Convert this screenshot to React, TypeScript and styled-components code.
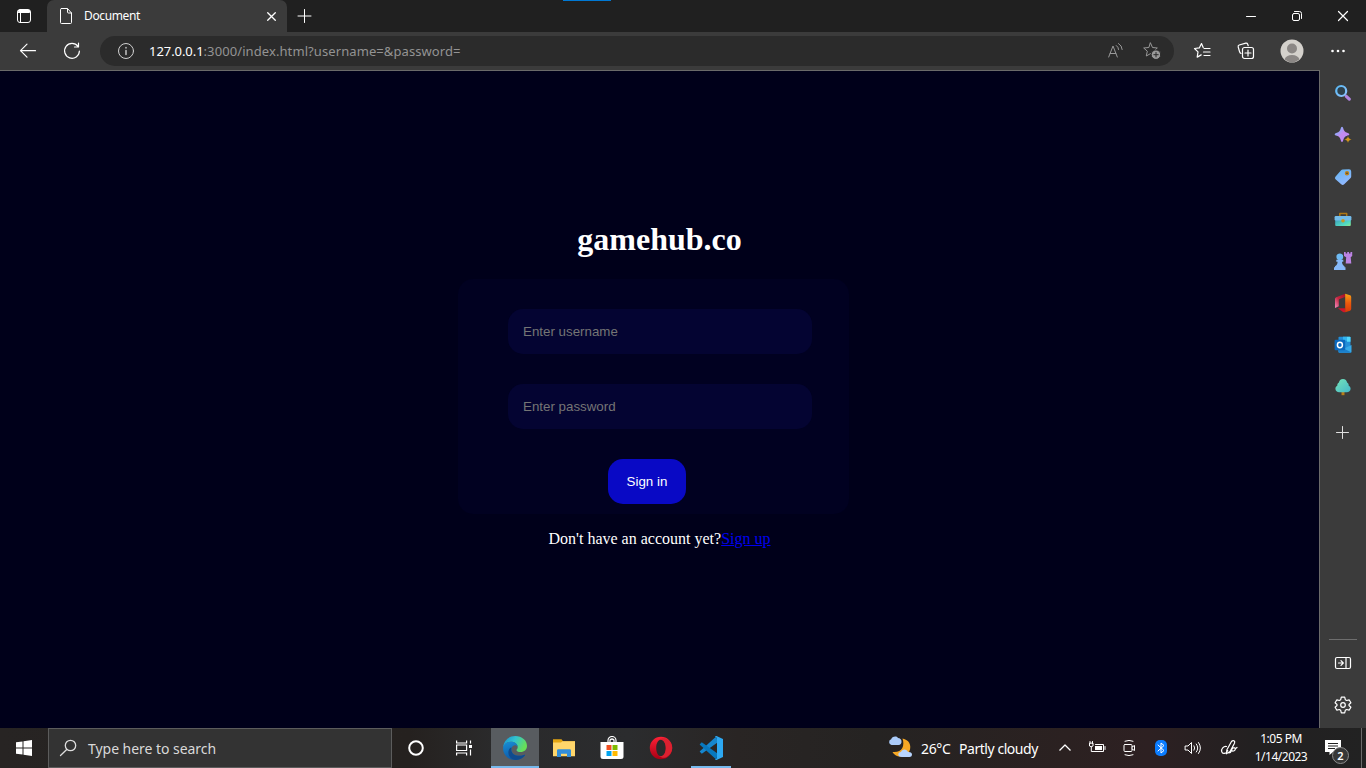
import React from "react";
import styled, { createGlobalStyle } from "styled-components";

const ui = `"Noto Sans", "Open Sans", sans-serif`;

const GlobalStyle = createGlobalStyle`
  * { box-sizing: border-box; }
  body { margin: 0; background: #00001a; overflow: hidden; }
`;

const Screen = styled.div`
  width: 1366px;
  height: 768px;
  display: flex;
  flex-direction: column;
  overflow: hidden;
  font-family: ${ui};
  color: #fff;
`;

const TabStrip = styled.header`
  position: relative;
  height: 32px;
  flex: none;
  display: flex;
  background: #202020;
`;

const AccentMark = styled.span`
  position: absolute;
  left: 563px;
  top: 0;
  width: 48px;
  height: 1px;
  background: #0078d4;
`;

const Slot = styled.span<{ $w: number }>`
  width: ${(p) => p.$w}px;
  flex: none;
  display: flex;
  align-items: center;
  justify-content: center;
`;

const Tab = styled.div`
  width: 240px;
  display: flex;
  align-items: center;
  padding: 0 8px 0 11px;
  background: #3b3b3b;
  border-radius: 7px 7px 0 0;
  font-size: 12px;
`;

const TabTitle = styled.span`
  flex: 1;
  margin-left: 10px;
  padding-bottom: 1px;
  letter-spacing: -0.38px;
`;

const WindowControls = styled.div`
  margin-left: auto;
  display: flex;
`;

const Toolbar = styled.div`
  height: 38px;
  flex: none;
  display: flex;
  align-items: center;
  padding-left: 6px;
  background: #3b3b3b;
`;

const AddressBar = styled.div`
  width: 1074px;
  height: 30px;
  margin: 0 6px;
  padding: 0 4px 0 8px;
  display: flex;
  align-items: center;
  border-radius: 15px;
  background: #2b2b2b;
`;

const Url = styled.span`
  flex: 1;
  margin-left: 5px;
  font-size: 13px;
  letter-spacing: 0.09px;
  color: #939393;

  b {
    font-weight: 400;
    letter-spacing: -0.06px;
    color: #fff;
  }
`;

const Body = styled.div`
  height: 658px;
  flex: none;
  display: flex;
  background: #3b3b3b;
`;

const Page = styled.main`
  width: 1320px;
  border-top: 1px solid #6a6a6a;
  border-right: 1px solid #6a6a6a;
  background: #00001a;
  display: flex;
  flex-direction: column;
  align-items: center;
  font-family: "Liberation Serif", serif;
`;

const Brand = styled.h1`
  margin: 150px 0 0;
  font-size: 32px;
  line-height: 36px;
`;

const LoginCard = styled.form`
  width: 391px;
  height: 235px;
  margin: 22px 12px 0 0;
  padding: 30px 37px 0 50px;
  display: flex;
  flex-direction: column;
  gap: 30px;
  border-radius: 15px;
  background: #010121;
`;

const Field = styled.input`
  width: 304px;
  height: 45px;
  flex: none;
  padding: 0 15px;
  border: 0;
  border-radius: 15px;
  background: #040432;
  color: #fff;
  font: 13.333px "Liberation Sans", sans-serif;

  &::placeholder {
    color: #757575;
  }
`;

const SubmitButton = styled.button`
  width: 78px;
  height: 45px;
  flex: none;
  margin-left: 100px;
  padding: 0;
  border: 0;
  border-radius: 15px;
  background: #0909c5;
  color: #fff;
  font: 13.333px "Liberation Sans", sans-serif;
`;

const SignUpLine = styled.p`
  margin: 16px 0 0;
  font-size: 16px;
  line-height: 18px;

  a {
    color: #0000ee;
    text-decoration: underline;
  }
`;

const Sidebar = styled.aside`
  width: 46px;
  display: flex;
  flex-direction: column;
  align-items: center;
  padding: 2px 0;
`;

const SideItem = styled.span<{ $before?: number }>`
  height: 42px;
  flex: none;
  margin-top: ${(p) => p.$before ?? 0}px;
  display: flex;
  align-items: center;
`;

const SideDivider = styled.hr`
  width: 28px;
  height: 1px;
  margin: auto 0 2px;
  border: 0;
  background: #6e6e6e;
`;

const Taskbar = styled.footer`
  height: 40px;
  flex: none;
  display: flex;
  background: linear-gradient(90deg, #272423 0, #25211f 30%, #2a2a2b 36%, #2b2c2e 46%, #292524 54%, #252322 64%, #2b2121 78%, #2d2022 84%, #222021 92%, #222 100%);
`;

const SearchBox = styled.div`
  width: 344px;
  display: flex;
  align-items: center;
  padding-left: 10px;
  border: 1px solid #5c5c5c;
  background: #333;
  color: #d9d9d9;
  font-size: 14px;
  letter-spacing: -0.04px;

  span {
    margin-left: 11px;
  }
`;

const AppButton = styled.span<{ $w: number; $active?: boolean; $line?: boolean }>`
  width: ${(p) => p.$w}px;
  display: flex;
  align-items: center;
  justify-content: center;
  background: ${(p) => (p.$active ? "#585c60" : "transparent")};
  box-shadow: ${(p) => (p.$line ? "inset 0 -2px #76b9ed" : "none")};
`;

const Tray = styled.div`
  margin-left: auto;
  width: 478px;
  display: flex;
  align-items: center;
`;

const Weather = styled.span`
  width: 161px;
  display: flex;
  align-items: center;
  font-size: 14px;
  white-space: nowrap;
`;

const Temperature = styled.span`
  width: 38px;
  margin-left: 7px;
  letter-spacing: -0.35px;
`;

const Condition = styled.span`
  letter-spacing: -0.45px;
`;

const Clock = styled.span`
  width: 66px;
  margin-right: 2px;
  display: flex;
  flex-direction: column;
  align-items: center;
  font-size: 12px;
  line-height: 18px;
  letter-spacing: -0.5px;
  white-space: nowrap;
`;

const Notifications = styled.span`
  width: 46px;
  height: 40px;
  display: flex;
  align-items: center;
  padding-left: 8px;
  border-right: 1px solid #6b6b6b;
  position: relative;
`;

const Count = styled.b`
  position: absolute;
  left: 16px;
  top: 19px;
  width: 17px;
  height: 17px;
  display: flex;
  align-items: center;
  justify-content: center;
  border: 1px solid #8c8c8c;
  border-radius: 50%;
  background: #373737;
  font-size: 11px;
  font-weight: 600;
  line-height: 14px;
`;

const Svg = styled.svg`
  display: block;
  flex: none;
`;

type IconProps = { w?: number; h?: number; color?: string; sw?: number; children: React.ReactNode };

const Icon = ({ w = 16, h = w, color = "#fff", sw = 1, children }: IconProps) => (
  <Svg width={w} height={h} viewBox={`0 0 ${w} ${h}`} fill="none" stroke={color} strokeWidth={sw} strokeLinecap="round" strokeLinejoin="round">
    {children}
  </Svg>
);

const starPath = "M7.500 1l2 4.500 4.800.5-3.600 3.200 1 4.800-4.200-2.400-4.200 2.400 1-4.800L.7 6l4.800-.5z";

const SearchLens = () => (
  <Icon w={18}>
    <defs>
      <linearGradient id="lens" x1="0" y1="0" x2="1" y2="1">
        <stop offset="0" stopColor="#58b7f3" />
        <stop offset="1" stopColor="#8fc3ff" />
      </linearGradient>
    </defs>
    <path d="M12.300 12.300l3 2.800" stroke="#b184e0" strokeWidth="3.2" />
    <circle cx="7.200" cy="7" r="5" fill="#2e414c" stroke="url(#lens)" strokeWidth="2.200" />
  </Icon>
);

const Sparkle = () => (
  <Icon w={18}>
    <defs>
      <linearGradient id="spark" x1="0" y1="0" x2="1" y2="1">
        <stop offset="0.1" stopColor="#72b9ff" />
        <stop offset="0.5" stopColor="#c58aef" />
        <stop offset="1" stopColor="#b18cff" />
      </linearGradient>
    </defs>
    <path d="M8 .8Q9 .8 9.300 2.500q.7 3.400 3.900 4.300 2.200.5 2.200 1.500t-2.200 1.500q-3.200.9-3.900 4.300Q9 16 8 16t-1.300-1.900Q6 10.700 2.800 9.800.6 9.300.6 8.300t2.200-1.500Q6 5.900 6.700 2.500 7 .8 8 .8z" fill="url(#spark)" stroke="none" />
    <path d="M14 9.700q.6 3.200 3.800 3.800-3.200.6-3.800 3.800-.6-3.200-3.800-3.800 3.200-.6 3.800-3.800z" fill="#d1961c" stroke="#3b3b3b" strokeWidth=".4" />
  </Icon>
);

const PriceTag = () => (
  <Icon w={18}>
    <defs>
      <linearGradient id="tag" x1="0" y1="0" x2="0.5" y2="1">
        <stop offset="0" stopColor="#62b5ef" />
        <stop offset="1" stopColor="#91b8ff" />
      </linearGradient>
    </defs>
    <path d="M8.700 1.400l6.300-.1q2.200 0 2.200 2.200V8.600q0 .8-.6 1.500l-6.400 6.200q-1.500 1.400-3 0L1.500 11.300q-1.300-1.400.1-2.800l5.500-6.300q.6-.8 1.600-.8z" fill="url(#tag)" stroke="none" />
    <circle cx="13" cy="5.300" r="1.500" fill="#273142" stroke="#bd831d" strokeWidth="1.500" />
  </Icon>
);

const Toolbox = () => (
  <Icon w={18}>
    <defs>
      <linearGradient id="box" x1="0" y1="0" x2="1" y2="1">
        <stop offset="0" stopColor="#3b95bc" />
        <stop offset="0.700" stopColor="#51dcc2" />
        <stop offset="1" stopColor="#91e58b" />
      </linearGradient>
    </defs>
    <path d="M5.800 6V3.500h6.900V6" stroke="#af7713" strokeWidth="1.500" />
    <rect x="1.200" y="8" width="15.600" height="8" rx="1" fill="url(#box)" stroke="none" />
    <rect x=".6" y="6" width="16.800" height="4.400" rx="1.200" fill="#74bcea" stroke="none" />
    <circle cx="9" cy="10.700" r="1.800" fill="#c59a25" stroke="none" />
  </Icon>
);

const ChessPieces = () => (
  <Icon w={20}>
    <g stroke="none">
      <path d="M11 1h1.700v1.500h1.500V1H16v1.500h1.500V1h1.700v4l-1.500 1.200.6 6.300h-5.600l.5-6.300L11 5z" fill="#bc83e3" />
      <circle cx="6.800" cy="5.800" r="3.400" fill="#6ebbf4" />
      <path d="M3.300 8.800h7v1.900H9c0 2.100 1 3.500 2.500 4.500v1h1v2.800H1v-2.800h1v-1c1.600-1 2.600-2.400 2.600-4.500H3.300z" fill="#87b9f8" />
    </g>
  </Icon>
);

const OfficeLogo = () => (
  <Icon w={18} h={20}>
    <defs>
      <linearGradient id="officeRight" x1="0" y1="0" x2="0" y2="1">
        <stop offset="0" stopColor="#f7a316" />
        <stop offset="0.500" stopColor="#ec5a0c" />
        <stop offset="1" stopColor="#d83a08" />
      </linearGradient>
      <linearGradient id="officeLeft" x1="1" y1="0" x2="0" y2="1">
        <stop offset="0" stopColor="#a90f22" />
        <stop offset="0.500" stopColor="#c4263f" />
        <stop offset="1" stopColor="#f48bc0" />
      </linearGradient>
    </defs>
    <g stroke="none">
      <path d="M11.200.8L2.200 4.300Q1 4.800 1 6v9l3.800-1.800V7q0-.8.8-1.100l5.600-1.800z" fill="url(#officeLeft)" />
      <path d="M3.800 15.300h7.400v3.900l-1 .1q-.6 0-1.100-.3z" fill="#d0162a" />
      <path d="M11.200.8l4.800 1.500q1.200.4 1.200 1.600v12.200q0 1.200-1.200 1.600l-4.800 1.500z" fill="url(#officeRight)" />
    </g>
  </Icon>
);

const OutlookLogo = () => (
  <Icon w={18}>
    <g stroke="none">
      <path d="M4.500 1.500q0-.8.800-.8h10.400q.8 0 .8.800V12h-12z" fill="#238ed8" />
      <path d="M9 .7h4v4H9z" fill="#32b4ef" />
      <path d="M13 .7h2.700q.8 0 .8.800v4.200H13z" fill="#50d7fc" />
      <path d="M4.500 9l6.500 3 6.500-3v6.700q0 1-1 1h-11q-1 0-1-1z" fill="#35a9e8" />
      <path d="M4.500 10l12.700 6.300q-.3.400-.7.400h-11q-1 0-1-1z" fill="#1b80cd" />
      <rect x=".6" y="3.700" width="10.600" height="10.600" rx="1" fill="#0b68bd" />
    </g>
    <ellipse cx="5.900" cy="9" rx="2.500" ry="2.700" strokeWidth="1.500" />
  </Icon>
);

const Tree = () => (
  <Icon w={18}>
    <defs>
      <linearGradient id="tree" x1="0" y1="0" x2="1" y2="1">
        <stop offset="0" stopColor="#75e4b7" />
        <stop offset="1" stopColor="#45b8ca" />
      </linearGradient>
    </defs>
    <path d="M9 12.500v4.700" stroke="#b77d18" strokeWidth="3" strokeLinecap="butt" />
    <path d="M9 .9c2.400 0 3.800 1.600 4.100 3.700 1.500.8 1.700 2 1.500 3 1.400.8 2 1.900 2 3.200 0 2.300-1.800 3.500-3.800 3.500H5.200c-2 0-3.800-1.200-3.800-3.500 0-1.300.6-2.400 2-3.200-.2-1 0-2.200 1.500-3C5.200 2.500 6.600.9 9 .9z" fill="url(#tree)" stroke="none" />
  </Icon>
);

const Plus = ({ size }: { size: number }) => (
  <Icon w={size}>
    <path d={`M${size / 2} 1v${size - 2}M1 ${size / 2}h${size - 2}`} />
  </Icon>
);

const SidebarPlus = () => (
  <Icon w={14} color="#e0e0e0">
    <path d="M6.500 .5v12M.5 6.500h12" />
  </Icon>
);

const Gear = () => (
  <Icon w={18} sw={1.2}>
    <path d="M7.300 1.200h3.400l.6 2.500 1.400.8 2.400-.7 1.800 3L15 8.500v1l1.900 1.700-1.800 3-2.400-.7-1.400.8-.6 2.500H7.300l-.6-2.500-1.400-.8-2.400.7-1.800-3L3 9.500v-1L1.100 6.800l1.800-3 2.400.7 1.400-.8z" />
    <circle cx="9" cy="9" r="2.300" />
  </Icon>
);

const EdgeLogo = () => (
  <Icon w={24}>
    <defs>
      <linearGradient id="edgeTop" x1="0" y1="0" x2="1" y2="0.400">
        <stop offset="0" stopColor="#168ccf" />
        <stop offset="0.500" stopColor="#32c3cf" />
        <stop offset="1" stopColor="#67df58" />
      </linearGradient>
      <linearGradient id="edgeLow" x1="0" y1="0" x2="0.300" y2="1">
        <stop offset="0" stopColor="#188ed5" />
        <stop offset="1" stopColor="#0c59a8" />
      </linearGradient>
    </defs>
    <g stroke="none">
      <path d="M.3 11C.7 4.600 5.800.1 12.200.1 19 .1 24 4.500 24 10c0 3.800-3 6-6.300 6-2.700 0-4.200-1-4.200-1.800 0-.7 1.200-1.300 1.200-3.100C14.700 8 11.500 5.800 8 5.800 4.500 5.800 2 7.700.3 11z" fill="url(#edgeTop)" />
      <path d="M.1 12.200C.1 8.600 3.500 5.800 7.800 5.800c3.600 0 6.600 2 6.900 4.900-.8-1.200-2-1.700-3-1.500-2.400.3-3.800 2.700-3.200 5.600.8 4.300 6.800 6.200 12.400 4.100.9-.3 1.300.1.8.8C19.300 22.500 15.800 24 12.100 24 5.300 24 .1 18.700.1 12.200z" fill="url(#edgeLow)" />
      <path d="M8.400 12.700c-.9 5.400 5.600 9 12.500 6.200 1-.4 1.300.2.700.9-2 2.500-5.200 4-8.500 4.200-4.700-.2-8-4-7.700-8 .1-2.100 1.300-4 3-4.700z" fill="#114b8d" />
    </g>
  </Icon>
);

const FolderLogo = () => (
  <Icon w={22} h={20}>
    <g stroke="none">
      <path d="M0 1.200h8.500l1.500 2h12v5H0z" fill="#e3a512" />
      <path d="M0 4.500h8l1.500-1.300H22v15H0z" fill="#ffd66b" />
      <path d="M4 19v-6.500q0-1.200 1.200-1.200h11.600q1.200 0 1.200 1.200V19h-4v-3.300H8V19z" fill="#328ed9" />
    </g>
  </Icon>
);

const StoreLogo = () => (
  <Icon w={24}>
    <path d="M8 6V4.500a4 4 0 018 0V6M10 6V4q2-2 4 0v2" strokeWidth="1.200" />
    <g stroke="none">
      <path d="M.5 6h23v14.500q0 2.500-2.500 2.500H3Q.5 23 .5 20.500z" fill="#fff" />
      <path d="M6.500 9h5v5h-5z" fill="#f25022" />
      <path d="M12.500 9h5v5h-5z" fill="#7fba00" />
      <path d="M6.500 15h5v5h-5z" fill="#00a4ef" />
      <path d="M12.500 15h5v5h-5z" fill="#ffb900" />
    </g>
  </Icon>
);

const OperaLogo = () => (
  <Icon w={24}>
    <defs>
      <linearGradient id="opera" x1="0" y1="0" x2="0" y2="1">
        <stop offset="0" stopColor="#ff2136" />
        <stop offset="1" stopColor="#a70014" />
      </linearGradient>
    </defs>
    <path fillRule="evenodd" stroke="none" fill="url(#opera)" d="M12 .8a11.200 11.200 0 100 22.400A11.200 11.200 0 1012 .8zm0 2.800c2.700 0 4.800 3.700 4.800 8.400s-2.100 8.400-4.800 8.400-4.800-3.700-4.800-8.400S9.300 3.600 12 3.600z" />
    <path d="M10 4.200C13 .9 17 2.500 17.700 3 21 5 23.200 8 23.200 12S21 19 17.700 21c-.8.500-4.600 2-7.700-1.200 4 1.700 6.800-2.800 6.800-7.800S14 2.500 10 4.200z" fill="#dc2130" stroke="none" />
  </Icon>
);

const CodeLogo = () => (
  <Icon w={24}>
    <g stroke="none">
      <path d="M17.500.2L.6 15.400l2.200 2.400 15.700-11.300z" fill="#1686ce" />
      <path d="M17.500 23.800L.6 8.600l2.200-2.400 15.700 11.300z" fill="#0878be" />
      <path d="M17.500 0L24 3v18l-6.500 3q-1 .2-1.500-.8 2 .2 2-1.700V2.500Q18 .8 16 .8q.5-1 1.500-.8z" fill="#2da8f2" />
    </g>
  </Icon>
);

const WeatherIcon = () => (
  <Icon w={26}>
    <g stroke="none">
      <path d="M14.500 3.500c6.700 1.300 8.700 6.500 7.500 11-1.400 5.600-8 8.500-13 6.500-2-.8-3.600-2.300-4.500-4C14 18 17 11 14.500 3.500z" fill="#f6a824" />
      <path d="M3.500 10a3 3 0 01-.3-5.800C3.500 2 8.200 0 10 3c2 0 3.500 1.300 3.500 3.200A3.500 3.500 0 0110.500 10z" fill="#aacbfa" />
      <path d="M14 22c-5 0-4.500-5-1-5 .8-3.400 6-3.400 7 0 2.500-.3 4 1 4 2.500 0 1.700-1.200 2.500-2.500 2.500z" fill="#b8d5ff" />
    </g>
  </Icon>
);

const tools = [SearchLens, Sparkle, PriceTag, Toolbox, ChessPieces, OfficeLogo, OutlookLogo, Tree];

export default function App() {
  return (
    <Screen>
      <GlobalStyle />
      <TabStrip>
        <AccentMark />
        <Slot $w={47}>
          <Icon>
            <rect x="1.500" y="1.500" width="13" height="13" rx="2.500" />
            <path d="M2.500 2.500h11v2h-11z" fill="#fff" />
            <path d="M4.500 5v9" />
          </Icon>
        </Slot>
        <Tab>
          <Icon>
            <path d="M3.500.500h6l4 4.500v9.500q0 1-1 1h-9q-1 0-1-1v-13q0-1 1-1zM9.500 1v3q0 1 1 1h3" />
          </Icon>
          <TabTitle>Document</TabTitle>
          <Icon sw={1.3}>
            <path d="M4.700 4.700l7.600 7.600M12.300 4.700l-7.600 7.600" />
          </Icon>
        </Tab>
        <Slot $w={35}>
          <Icon w={15}><path d="M7.500 .5v13M1 7h13" /></Icon>
        </Slot>
        <WindowControls>
          <Slot $w={46}><Icon><path d="M3.500 8.500h9" /></Icon></Slot>
          <Slot $w={46}>
            <Icon>
              <rect x="3.500" y="5.500" width="7" height="7" rx="1.500" />
              <path d="M5.500 3.500h5q2 0 2 2v5" />
            </Icon>
          </Slot>
          <Slot $w={46}><Icon sw={1.200}><path d="M3.500 3.500l9 9M12.500 3.500l-9 9" /></Icon></Slot>
        </WindowControls>
      </TabStrip>

      <Toolbar>
        <Slot $w={44}><Icon w={18}><path d="M16.500 8.700H1.500M8 2.200L1.500 8.700 8 15.200" strokeWidth="1.200" /></Icon></Slot>
        <Slot $w={44}><Icon w={18} sw={1.200}><path d="M15 4.500A7.400 7.400 0 1016.400 9M15.500 1v4h-4" /></Icon></Slot>
        <AddressBar>
          <Slot $w={36}>
            <Icon w={18} color="#d0d0d0">
              <circle cx="9" cy="9" r="7.500" />
              <path d="M9 8.500v4M9 5.500v.5" strokeWidth="1.400" />
            </Icon>
          </Slot>
          <Url><b>127.0.0.1</b>:3000/index.html?username=&amp;password=</Url>
          <Slot $w={36}>
            <Icon w={18} color="#999">
              <path d="M2.700 15L7 4l4.300 11M4.200 11.500h5.600M10.300 3.500q2.200 1.500 2.300 4M12.500 1.500q3.500 2 3.700 6" />
            </Icon>
          </Slot>
          <Slot $w={37}>
            <Icon w={18} color="#999">
              <path d={starPath} />
              <circle cx="13" cy="12.700" r="4.800" fill="#999" stroke="#2b2b2b" />
              <path d="M13 10.500v4.400M10.800 12.700h4.400" stroke="#2b2b2b" />
            </Icon>
          </Slot>
        </AddressBar>
        <Slot $w={44}>
          <Icon w={18} sw={1.2}>
            <path d="M10.200 5.500l-1.700-4-2.200 4.400L1.500 6.500 5 9.900l-.8 5.200 4-2.200M11 6.500h6M10.500 10H17M11 13.500h6" />
          </Icon>
        </Slot>
        <Slot $w={44}>
          <Icon w={18} sw={1.2}>
            <path d="M4 11.500Q2.900 11 2.500 9.500L1.200 5Q.8 3.500 2.200 3l6.600-1.800q1.400-.3 1.900 1l.5 1.500" />
            <rect x="5.500" y="5.500" width="11" height="11" rx="2" />
            <path d="M11 8v6M8 11h6" />
          </Icon>
        </Slot>
        <Slot $w={47}>
          <Icon w={24}>
            <g stroke="none">
              <circle cx="12" cy="12" r="11.500" fill="#d4d1cc" />
              <circle cx="12" cy="9.500" r="5" fill="#8b8785" />
              <path d="M4.500 20.500q1.500-4.500 7.500-4.500t7.500 4.500Q12 26 4.500 20.500z" fill="#8b8785" />
            </g>
          </Icon>
        </Slot>
        <Slot $w={45}>
          <Icon>
            <g fill="#fff" stroke="none">
              <circle cx="2.500" cy="8" r="1.300" /><circle cx="8" cy="8" r="1.300" /><circle cx="13.500" cy="8" r="1.300" />
            </g>
          </Icon>
        </Slot>
      </Toolbar>

      <Body>
        <Page>
          <Brand>gamehub.co</Brand>
          <LoginCard>
            <Field placeholder="Enter username" />
            <Field type="password" placeholder="Enter password" />
            <SubmitButton type="button">Sign in</SubmitButton>
          </LoginCard>
          <SignUpLine>Don't have an account yet?<a href="#signup">Sign up</a></SignUpLine>
        </Page>
        <Sidebar>
          {tools.map((Tool, i) => (
            <SideItem key={i}><Tool /></SideItem>
          ))}
          <SideItem $before={4}><SidebarPlus /></SideItem>
          <SideDivider />
          <SideItem>
            <Icon w={18} sw={1.200}>
              <rect x="1.500" y="3.500" width="15" height="11" rx="1.500" />
              <path d="M12 3.500v11M4.500 9H9M7 6.700L9.300 9 7 11.300" />
            </Icon>
          </SideItem>
          <SideItem><Gear /></SideItem>
        </Sidebar>
      </Body>

      <Taskbar>
        <Slot $w={48}>
          <Icon>
            <path d="M0 2.300l6.500-.9v6.100H0zM7.500 1.200L16 0v7.500H7.500zM0 8.500h6.500v6.100L0 13.700zM7.500 8.500H16V16l-8.500-1.200z" fill="#fff" stroke="none" />
          </Icon>
        </Slot>
        <SearchBox>
          <Icon w={18} color="#ddd" sw={1.300}>
            <circle cx="11.500" cy="6.500" r="5.200" /><path d="M7.700 10.500L1.500 16.500" />
          </Icon>
          <span>Type here to search</span>
        </SearchBox>
        <AppButton $w={48}><Icon w={18} sw={2}><circle cx="9" cy="9" r="6.800" /></Icon></AppButton>
        <AppButton $w={48}>
          <Icon sw={1.200}>
            <path d="M.6.500v2.500h10V.500M.6 15.500V13h10v2.500M.6 5h10v5.500H.6zM14.500.5v3M14.500 9.500v6" strokeLinecap="butt" strokeLinejoin="miter" />
            <path d="M13 5h3v3h-3z" fill="#fff" stroke="none" />
          </Icon>
        </AppButton>
        <Slot $w={3} />
        <AppButton $w={48} $active $line><EdgeLogo /></AppButton>
        <AppButton $w={49}><FolderLogo /></AppButton>
        <AppButton $w={48}><StoreLogo /></AppButton>
        <AppButton $w={50}><OperaLogo /></AppButton>
        <Slot $w={5} />
        <AppButton $w={40} $line><CodeLogo /></AppButton>
        <Tray>
          <Weather>
            <WeatherIcon />
            <Temperature>26°C</Temperature>
            <Condition>Partly cloudy</Condition>
          </Weather>
          <Slot $w={32}><Icon sw={1.300}><path d="M2.500 10.500L8 5l5.500 5.500" strokeLinecap="butt" /></Icon></Slot>
          <Slot $w={32}>
            <Icon w={18}>
              <path d="M7.500 5.500h8v7h-10M17 7.500v3M1.500 4.500v2.500q1.500 1.500 3.500 0V4.500zM2 2.500v2M4.500 2.500v2M3.300 8v4.500h2" />
              <path d="M7 7h7v4H7z" fill="#fff" stroke="none" />
            </Icon>
          </Slot>
          <Slot $w={32}>
            <Icon w={18}>
              <rect x="4" y="5.500" width="8" height="7" rx="1" />
              <path d="M12 8l2.500-1.500v5L12 10M5 2.200q4-1.700 8 0M5 15.800q4 1.700 8 0" />
            </Icon>
          </Slot>
          <Slot $w={32}>
            <Icon w={12} h={16}>
              <rect width="12" height="16" rx="5" fill="#0a7cff" stroke="none" />
              <path d="M3 5l6 5.500L6 13V3l3 2.500L3 11" />
            </Icon>
          </Slot>
          <Slot $w={32}>
            <Icon w={18}>
              <path d="M1.500 7H4l3.500-3.500v11L4 11H1.500zM10 6.800q1.500 2.200 0 4.400M12.300 5q3 4 0 8M14.500 3.500q4 5.500 0 11" />
            </Icon>
          </Slot>
          <Slot $w={39}>
            <Icon w={18} sw={1.200}>
              <path d="M6.500 7.500C3.500 7 1 10 1.700 12.700s4.600 2.300 6-1.200M6.300 14.800l.6-4 4.600-8.300q1.300-1.500 2.500-.7t.5 2.500L10 12.600zM11.500 11.500c.3-3 3.300-3.500 3.800-1.800s-2.300 3.300-3.800 1.800q-.8 2.500-2.500 2.500M15.300 9.700L17 8.500" />
            </Icon>
          </Slot>
          <Clock><span>1:05 PM</span><span>1/14/2023</span></Clock>
          <Notifications>
            <Icon w={18}>
              <path d="M1 1h16v12H9l-3.500 3v-3H1z" fill="#fff" stroke="none" />
              <path d="M4 4.500h10M4 7h10M4 9.500h7" stroke="#222" strokeLinecap="butt" />
            </Icon>
            <Count>2</Count>
          </Notifications>
        </Tray>
      </Taskbar>
    </Screen>
  );
}
